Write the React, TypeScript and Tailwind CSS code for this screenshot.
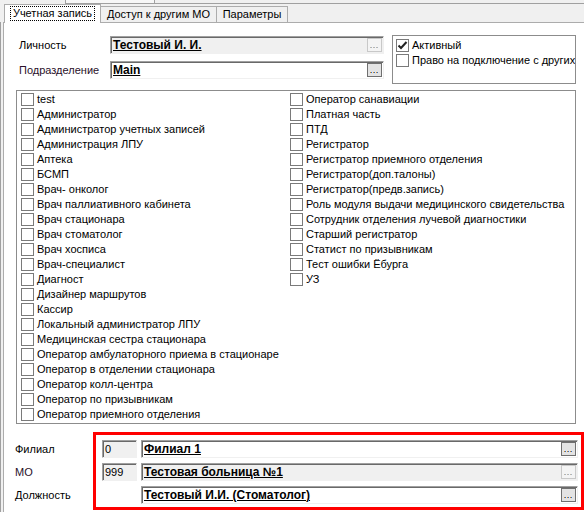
import type { ReactNode } from 'react'

const leftRoles = [
  'test',
  'Администратор',
  'Администратор учетных записей',
  'Администрация ЛПУ',
  'Аптека',
  'БСМП',
  'Врач- онколог',
  'Врач паллиативного кабинета',
  'Врач стационара',
  'Врач стоматолог',
  'Врач хосписа',
  'Врач-специалист',
  'Диагност',
  'Дизайнер маршрутов',
  'Кассир',
  'Локальный администратор ЛПУ',
  'Медицинская сестра стационара',
  'Оператор амбулаторного приема в стационаре',
  'Оператор в отделении стационара',
  'Оператор колл-центра',
  'Оператор по призывникам',
  'Оператор приемного отделения',
]

const rightRoles = [
  'Оператор санавиации',
  'Платная часть',
  'ПТД',
  'Регистратор',
  'Регистратор приемного отделения',
  'Регистратор(доп.талоны)',
  'Регистратор(предв.запись)',
  'Роль модуля выдачи медицинского свидетельства',
  'Сотрудник отделения лучевой диагностики',
  'Старший регистратор',
  'Статист по призывникам',
  'Тест ошибки Ёбурга',
  'УЗ',
]

function Box({ checked }: { checked?: boolean }) {
  return (
    <span className="flex h-[13px] w-[13px] shrink-0 items-center justify-center border border-[#7a7a7a] bg-white">
      {checked && (
        <svg width="11" height="11" viewBox="0 0 11 11">
          <path d="M1.5 5.5 L4 8 L9.5 2" fill="none" stroke="#222" strokeWidth="2" />
        </svg>
      )}
    </span>
  )
}

function Check({ label, checked }: { label: string; checked?: boolean }) {
  return (
    <div className="flex h-[15px] items-center whitespace-nowrap">
      <Box checked={checked} />
      <span className="ml-[3px] text-black">{label}</span>
    </div>
  )
}

function Browse({ disabled }: { disabled?: boolean }) {
  return (
    <div
      className={`ml-auto mr-[1px] flex h-[14px] w-[15px] shrink-0 items-end justify-center pb-[3px] border ${
        disabled ? 'border-[#c8c8c8] bg-[#f4f4f4]' : 'border-[#6f6f6f] bg-[#e3e3e3]'
      }`}
    >
      <svg width="9" height="1" viewBox="0 0 9 1">
        {[0, 3, 6].map((x) => (
          <g key={x}>
            <rect x={x} y="0" width="1" height="1" fill={disabled ? '#c0b8a8' : '#d08a2c'} />
            <rect x={x + 1} y="0" width="1" height="1" fill={disabled ? '#a8b4c4' : '#2e6fc8'} />
          </g>
        ))}
      </svg>
    </div>
  )
}

function Field({
  children,
  gray,
  disabled,
  browse = true,
  className = '',
}: {
  children?: ReactNode
  gray?: boolean
  disabled?: boolean
  browse?: boolean
  className?: string
}) {
  return (
    <div
      className={`flex h-[18px] items-center border border-t-[#a0a0a0] border-l-[#a0a0a0] border-b-[#f0f0f0] border-r-[#f0f0f0] pl-[2px] shadow-[inset_1px_1px_0_#696969] ${
        gray ? 'bg-[#f0f0f0]' : 'bg-white'
      } ${className}`}
    >
      {children}
      {browse && <Browse disabled={disabled} />}
    </div>
  )
}

function Value({ text }: { text: string }) {
  return (
    <span className="whitespace-nowrap text-[12px] font-bold text-black underline decoration-1 underline-offset-[1px]">
      {text}
    </span>
  )
}

export default function App() {
  return (
    <div className="h-[512px] w-[584px] overflow-hidden bg-[#f0f0f0] font-['Liberation_Sans',Arial,sans-serif] text-[11px] text-black">
      <div className="flex h-[4px]">
        <div className="w-[65px]" />
        <div className="w-[90px] border-b border-l border-r border-[#a0a0a0] bg-[#f7f7f7]" />
        <div className="flex-1 border-b border-[#a0a0a0]" />
      </div>

      <div className="flex h-[18px] items-end pl-[4px]">
        <div className="relative z-10 -mb-px flex h-[19px] w-[97px] items-start justify-center border border-b-0 border-[#acacac] bg-white pt-[1px]">
          <span className="flex h-[15px] items-center border border-dotted border-black px-[2px]">Учетная запись</span>
        </div>
        <div className="flex h-[16px] w-[116px] items-center justify-center border border-b-0 border-l-0 border-[#acacac] bg-[#f0f0f0]">
          Доступ к другим МО
        </div>
        <div className="flex h-[16px] w-[71px] items-center justify-center border border-b-0 border-l-0 border-[#acacac] bg-[#f0f0f0]">
          Параметры
        </div>
      </div>

      <div className="border-l border-[#a0a0a0] pl-[2px]">
        <div className="h-[500px] w-[620px] border border-[#acacac] bg-white">
          <div className="mt-[12px] flex">
            <div className="pl-[15px]">
              <div className="mt-[1px] flex h-[18px] items-center">
                <span className="w-[91px]">Личность</span>
                <Field gray disabled className="w-[274px]">
                  <Value text="Тестовый И. И." />
                </Field>
              </div>
              <div className="mt-[7px] flex h-[18px] items-center">
                <span className="w-[91px] text-[#2a102a]">Подразделение</span>
                <Field className="w-[274px]">
                  <Value text="Main" />
                </Field>
              </div>
            </div>
            <div className="ml-[8px] h-[49px] w-[184px] overflow-hidden border border-[#8c8c8c] pl-[3px] pt-[2px]">
              <Check label="Активный" checked />
              <Check label="Право на подключение с других" />
            </div>
          </div>

          <div className="ml-[12px] mt-[6px] flex h-[334px] w-[560px] overflow-hidden border border-[#8c8c8c] pl-[4px] pt-[1px]">
            <div className="w-[269px] shrink-0">
              {leftRoles.map((r) => (
                <Check key={r} label={r} />
              ))}
            </div>
            <div className="min-w-0 flex-1 overflow-hidden">
              {rightRoles.map((r) => (
                <Check key={r} label={r} />
              ))}
            </div>
          </div>

          <div className="mt-[8px] flex">
            <div className="flex w-[89px] flex-col gap-[5px] pl-[11px] pt-[8px]">
              <div className="flex h-[18px] items-center">Филиал</div>
              <div className="flex h-[18px] items-center text-[#2a102a]">МО</div>
              <div className="flex h-[18px] items-center">Должность</div>
            </div>
            <div className="flex w-[491px] flex-col gap-[5px] border-[3px] border-[#ff0000] pb-[3px] pl-[6px] pr-[3px] pt-[5px]">
              <div className="flex">
                <Field gray browse={false} className="mr-[4px] w-[35px]">
                  0
                </Field>
                <Field className="flex-1">
                  <Value text="Филиал 1" />
                </Field>
              </div>
              <div className="flex">
                <Field gray browse={false} className="mr-[4px] w-[35px]">
                  999
                </Field>
                <Field gray disabled className="flex-1">
                  <Value text="Тестовая больница №1" />
                </Field>
              </div>
              <div className="flex">
                <div className="mr-[4px] w-[35px]" />
                <Field className="flex-1">
                  <Value text="Тестовый И.И. (Стоматолог)" />
                </Field>
              </div>
            </div>
          </div>
        </div>
      </div>
    </div>
  )
}
